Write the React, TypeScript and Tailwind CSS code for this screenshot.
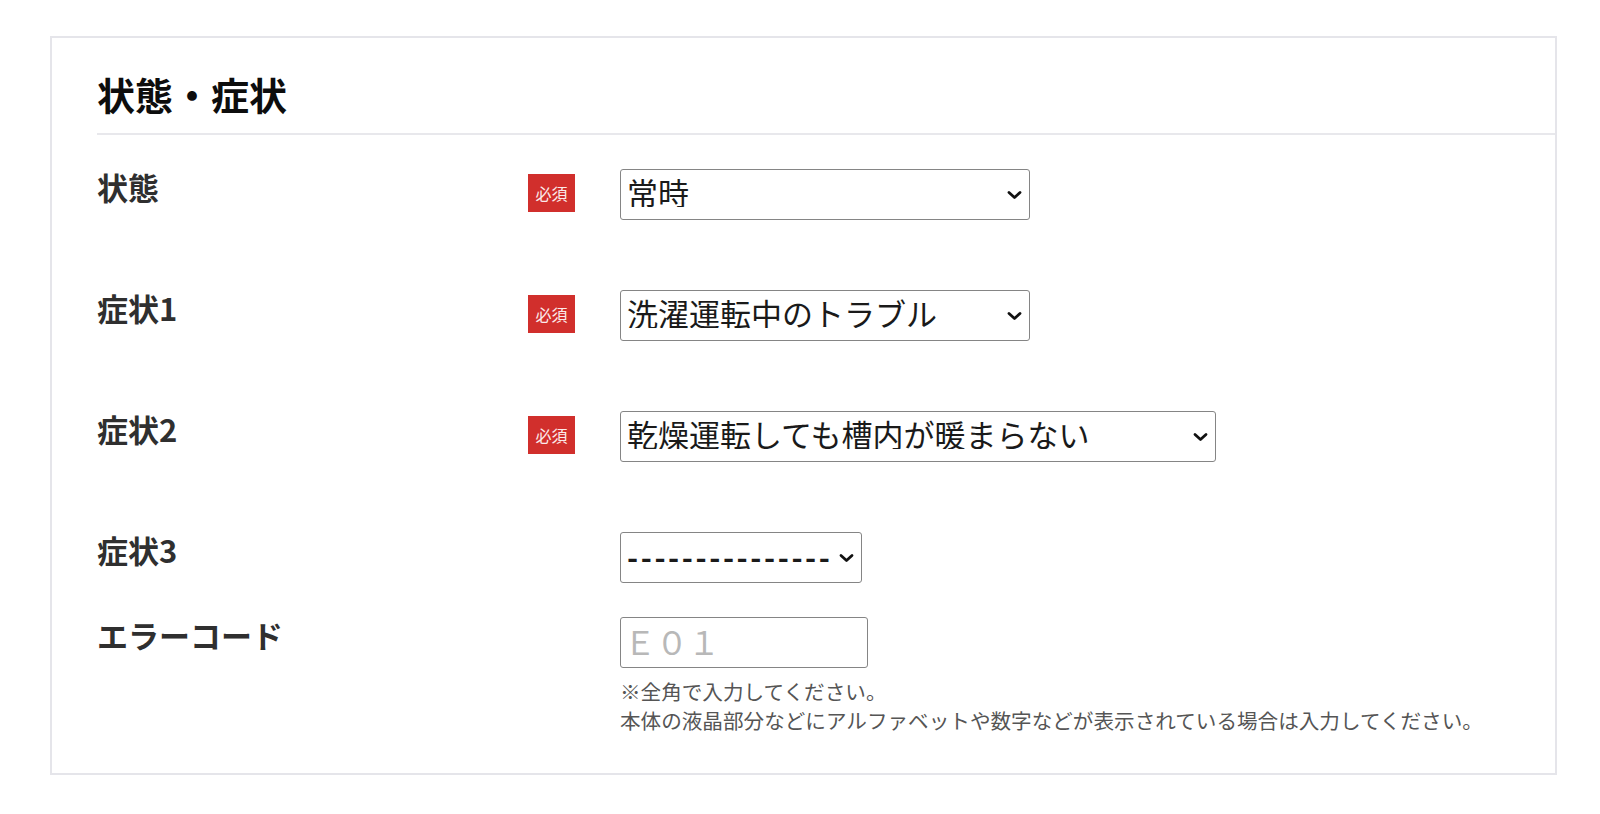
import React from "react";

const FONT = '"Noto Sans CJK JP", "Noto Sans", sans-serif';

function Chevron() {
  return (
    <svg
      className="pointer-events-none absolute right-[8px] top-1/2 -translate-y-1/2"
      width="15"
      height="9"
      viewBox="0 0 15 9"
      fill="none"
    >
      <path d="M2 2l5.5 5L13 2" stroke="#111" strokeWidth="2.8" strokeLinecap="round" strokeLinejoin="round" />
    </svg>
  );
}

function Required() {
  return (
    <span className="mt-[5px] flex h-[38px] w-[47px] items-center justify-center bg-[#d12f2c] text-[16px] leading-none text-[#fbeaea]">
      必須
    </span>
  );
}

function SelectBox({ value, width }: { value: string; width: string }) {
  return (
    <div className={`relative h-[51px] ${width}`}>
      <select
        defaultValue={value}
        className="h-full w-full appearance-none rounded-[3px] border border-[#858585] bg-white pb-[6px] pl-[6px] pr-[30px] text-[31px] leading-none text-[#1a1a1a] outline-none"
        style={{ fontFamily: FONT }}
      >
        <option value={value}>{value}</option>
      </select>
      <Chevron />
    </div>
  );
}

function Row({
  label,
  required,
  children,
  className = "",
}: {
  label: string;
  required?: boolean;
  children: React.ReactNode;
  className?: string;
}) {
  return (
    <div className={`flex items-start ${className}`}>
      <div className="w-[431px] text-[31px] font-bold leading-[36px] text-[#2f2f2f]">{label}</div>
      <div className="w-[92px]">{required ? <Required /> : null}</div>
      <div>{children}</div>
    </div>
  );
}

export default function App() {
  return (
    <div className="min-h-[814px] bg-white pt-[36px]" style={{ fontFamily: FONT }}>
      <section className="ml-[50px] w-[1507px] border-2 border-[#e5e5ea] bg-white pb-[38px]">
        <h2 className="ml-[45px] border-b-2 border-[#e8e8ec] pb-[16px] pt-[33px] text-[38px] font-bold leading-[46px] text-[#0d0d0d]">
          状態・症状
        </h2>
        <div className="pl-[45px] pt-[34px]">
          <Row label="状態" required>
            <SelectBox value="常時" width="w-[410px]" />
          </Row>
          <Row label="症状1" required className="mt-[70px]">
            <SelectBox value="洗濯運転中のトラブル" width="w-[410px]" />
          </Row>
          <Row label="症状2" required className="mt-[70px]">
            <SelectBox value="乾燥運転しても槽内が暖まらない" width="w-[596px]" />
          </Row>
          <Row label="症状3" className="mt-[70px]">
            <div className="relative h-[51px] w-[242px]">
              <select
                defaultValue="none"
                className="h-full w-full appearance-none rounded-[3px] border border-[#858585] bg-white pb-[4px] pl-[6px] pr-[26px] text-[30px] font-bold leading-none tracking-[2.6px] text-[#1a1a1a] outline-none"
                style={{ fontFamily: FONT }}
              >
                <option value="none">---------------</option>
              </select>
              <Chevron />
            </div>
          </Row>
          <Row label="エラーコード" className="mt-[34px]">
            <input
              type="text"
              placeholder="Ｅ０１"
              className="h-[51px] w-[248px] rounded-[3px] border border-[#858585] pb-[4px] pl-[3px] pr-[6px] text-[32px] text-[#1a1a1a] outline-none placeholder:text-[#b8b8b8]"
              style={{ fontFamily: FONT }}
            />
            <p className="mt-[9px] text-[20.6px] leading-[29px] text-[#555555]">
              ※全角で入力してください。
              <br />
              本体の液晶部分などにアルファベットや数字などが表示されている場合は入力してください。
            </p>
          </Row>
        </div>
      </section>
    </div>
  );
}
